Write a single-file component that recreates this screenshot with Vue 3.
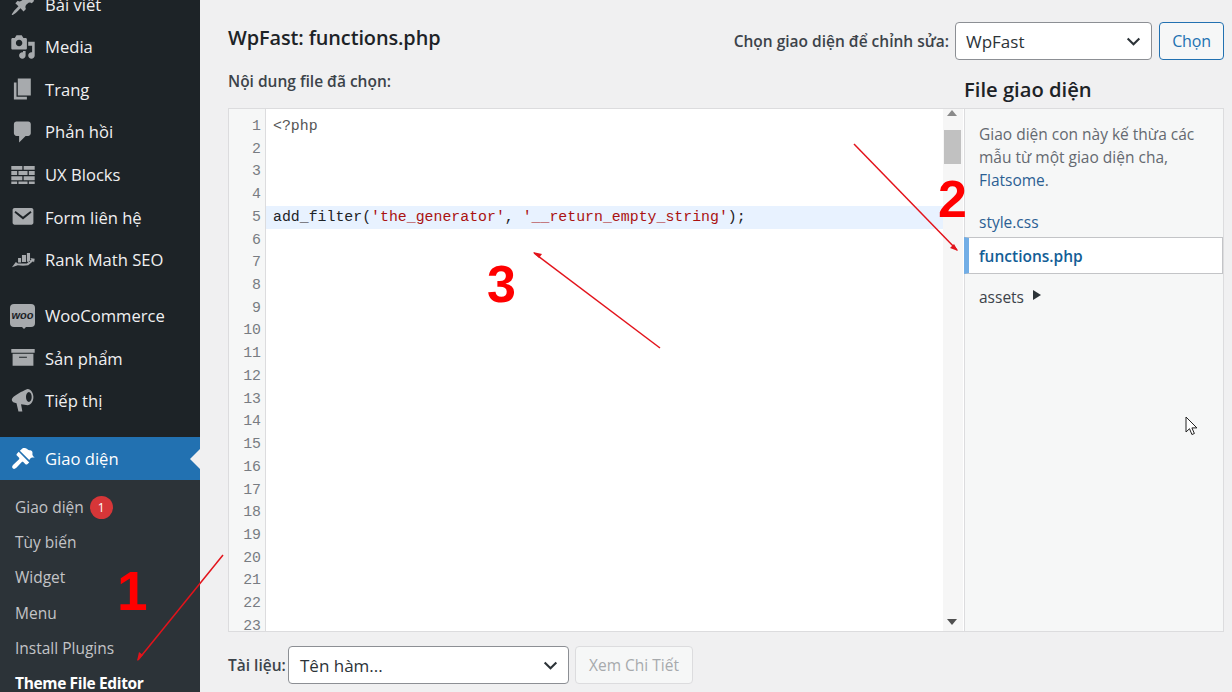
<script setup>
const icons = {
  post: 'M10.44 3.02l1.82-1.82 6.36 6.35-1.83 1.82c-1.05-.68-2.48-.57-3.41.36l-.75.75c-.92.93-1.04 2.35-.35 3.4l-1.83 1.82-2.41-2.41-2.8 2.79c-.42.42-3.38 2.71-3.8 2.29s1.86-3.39 2.28-3.81l2.79-2.79L4.1 9.36l1.83-1.82c1.05.69 2.48.57 3.4-.36l.75-.75c.93-.92 1.05-2.35.36-3.41z',
  media: 'M13 11V4c0-.55-.45-1-1-1h-1.67L9 1H5L3.67 3H2c-.55 0-1 .45-1 1v7c0 .55.45 1 1 1h10c.55 0 1-.45 1-1zM7 4.5c1.38 0 2.5 1.12 2.5 2.5S8.38 9.5 7 9.5 4.5 8.38 4.5 7 5.62 4.5 7 4.5zM14 6h5v10.5c0 1.38-1.12 2.5-2.5 2.5S14 17.88 14 16.5s1.12-2.5 2.5-2.5c.17 0 .34.02.5.05V9h-3V6zm-4 8.05V13h2v3.5c0 1.38-1.12 2.5-2.5 2.5S7 17.88 7 16.5 8.12 14 9.5 14c.17 0 .34.02.5.05z',
  page: 'M6 15V2h10v13H6zm-1 1h8v2H3V5h2v11z',
  comment: 'M5 2h9c1.1 0 2 .9 2 2v7c0 1.1-.9 2-2 2h-2l-5 5v-5H5c-1.1 0-2-.9-2-2V4c0-1.1.9-2 2-2z',
  blocks: 'M1 3h8.5v3H1zM10.5 3H19v3h-8.5zM1 7h4.5v3H1zM6.5 7h7v3h-7zM14.5 7H19v3h-4.5zM1 11h8.5v3H1zM10.5 11H19v3h-8.5zM1 15h4.5v2H1zM6.5 15h7v2h-7zM14.5 15H19v2h-4.5z',
  mail: 'M2 4.5C2 3.7 2.7 3 3.5 3h13c.8 0 1.5.7 1.5 1.5v10c0 .8-.7 1.5-1.5 1.5h-13C2.7 16 2 15.3 2 14.5zM4.3 5.4L3.4 6.6 10 11.9l6.6-5.3-.9-1.2L10 9.8z',
  rank: 'M13 4.6h2.4v6.7H13zM9.2 6.2h3.1v5.4H9.2zM6.2 8.5h2.3v3.5H6.2zM1.5 15.500L4.500 11.500 6 12.700h7l3.500-3.200-1-1 3.500.5-.5 3-.8-1L14 14l-4 .5-4-.5z',
  archive: 'M1 3h18v3H1zM2 6.800h16V16H2zM7 9v.8h6V9z',
  mega: 'M13.500.7C11 1.700 6 4 2.500 7c-1.500 1.500-1.500 3 0 4L5 11.800 6.500 18h3L8.500 12.500c2 .4 3.500.6 5 .7 2.500 0 4.500-2.700 4.500-6.200S16 .6 13.500.7zM14.500 3.100c-1.200 0-2.200 1.700-2.200 3.800s1 3.800 2.200 3.800 2.200-1.700 2.200-3.800-1-3.800-2.200-3.800z',
  brush: 'M7.600 3.600L14.800 10.800 16 9.300c.5-.6 1-.6 1.600-.5l1.400.1-1-.9c-.9-1-.8-1.700-.7-2.500.1-1-.3-1.700-1.100-2-.9-.3-1.700-.2-2.600-.8C12.800 1.800 10.500 1.200 9.500 2zM6.700 4.500L5.300 6c-.4.5-.4 1 0 1.400l1.500 1.500c.5.500.5 1 0 1.500l-4.300 4c-1 1-1.100 2-.4 2.800s1.800.6 2.800-.4l4-4.300c.5-.5 1-.5 1.500 0l1.500 1.500c.4.4.9.4 1.400 0l1.500-1.400z',
}
const group1 = [
  { label: 'Bài viết', icon: 'post' },
  { label: 'Media', icon: 'media' },
  { label: 'Trang', icon: 'page' },
  { label: 'Phản hồi', icon: 'comment' },
  { label: 'UX Blocks', icon: 'blocks' },
  { label: 'Form liên hệ', icon: 'mail' },
  { label: 'Rank Math SEO', icon: 'rank' },
]
const group2 = [
  { label: 'WooCommerce', icon: 'woo' },
  { label: 'Sản phẩm', icon: 'archive' },
  { label: 'Tiếp thị', icon: 'mega' },
]
const subs = ['Tùy biến', 'Widget', 'Menu', 'Install Plugins']
const lines = Array.from({ length: 23 }, (_, i) => i + 1)
</script>

<template>
  <div class="page">
    <aside class="side">
      <ul class="menu first">
        <li v-for="m in group1" :key="m.label" class="item">
          <svg class="ico" viewBox="0 0 20 20"><path :d="icons[m.icon]" /></svg>
          <span>{{ m.label }}</span>
        </li>
      </ul>
      <ul class="menu second">
        <li v-for="m in group2" :key="m.label" class="item">
          <span v-if="m.icon === 'woo'" class="woo">woo</span>
          <svg v-else class="ico" viewBox="0 0 20 20"><path :d="icons[m.icon]" /></svg>
          <span>{{ m.label }}</span>
        </li>
      </ul>
      <div class="active">
        <svg class="ico white" viewBox="0 0 20 20"><path :d="icons.brush" /></svg>
        <span>Giao diện</span>
        <i class="notch"></i>
      </div>
      <ul class="sub">
        <li>Giao diện <b class="badge">1</b></li>
        <li v-for="s in subs" :key="s">{{ s }}</li>
        <li class="current">Theme File Editor</li>
      </ul>
    </aside>

    <main class="main">
      <div class="top">
        <h1>WpFast: functions.php</h1>
        <div class="chooser">
          <label>Chọn giao diện để chỉnh sửa:</label>
          <div class="select theme">
            <span>WpFast</span>
            <svg class="chev" viewBox="0 0 16 16"><path d="M2.500 5.200L8 10.500l5.500-5.300" /></svg>
          </div>
          <button class="btn">Chọn</button>
        </div>
      </div>

      <div class="workspace">
        <section class="left">
          <div class="caption">Nội dung file đã chọn:</div>
          <div class="editor">
            <div class="gutter">
              <div v-for="n in lines" :key="n" class="num">{{ n }}</div>
            </div>
            <div class="code">
              <div v-for="n in lines" :key="n" class="line" :class="{ hl: n === 5 }">
                <template v-if="n === 1"><span class="meta">&lt;?php</span></template>
                <template v-else-if="n === 5">add_filter(<span class="str">'the_generator'</span>, <span class="str">'__return_empty_string'</span>);</template>
              </div>
            </div>
            <div class="scroll">
              <i class="up"></i>
              <i class="thumb"></i>
              <i class="down"></i>
            </div>
          </div>
        </section>

        <section class="right">
          <h2>File giao diện</h2>
          <div class="files">
            <p class="note">Giao diện con này kế thừa các mẫu từ một giao diện cha, <a>Flatsome</a>.</p>
            <a class="file">style.css</a>
            <a class="file on">functions.php</a>
            <div class="file dir">assets <i class="tri"></i></div>
          </div>
        </section>
      </div>

      <div class="docs">
        <label>Tài liệu:</label>
        <div class="select fn">
          <span>Tên hàm...</span>
          <svg class="chev" viewBox="0 0 16 16"><path d="M2.500 5.200L8 10.500l5.500-5.300" /></svg>
        </div>
        <button class="btn off">Xem Chi Tiết</button>
      </div>
    </main>

    <svg class="marks" viewBox="0 0 1232 692">
      <g class="arrows">
        <path d="M223 555L138 660" />
        <path d="M854 144L957 250" />
        <path d="M660 348L534 253" />
      </g>
      <path class="head" d="M137 661l2-9 4 3zM958 251l-8-3 4-4zM533 252l9 2-3 4z" />
      <text x="117" y="610" font-size="55">1</text>
      <text x="938" y="217" font-size="52">2</text>
      <text x="487" y="302" font-size="52">3</text>
    </svg>
    <svg class="cursor" viewBox="0 0 13 20"><path d="M1 1v15l3.500-3.300 2.400 5.800 2.500-1-2.500-5.600h5z" /></svg>
  </div>
</template>

<style>
html, body { margin: 0; background: #f0f0f1; overflow: hidden; }
</style>

<style scoped>
.page {
  position: relative;
  display: flex;
  width: 1232px;
  height: 692px;
  overflow: hidden;
  font-family: "Open Sans", "Noto Sans", sans-serif;
  color: #2c3338;
  background: #f0f0f1;
}
ul { list-style: none; margin: 0; padding: 0; }

.side {
  flex: 0 0 200px;
  background: #1d2327;
  color: #f0f0f1;
  font-size: 16.6px;
}
.menu.first { margin-top: -17.1px; }
.menu.second { margin-top: 13.4px; }
.item {
  display: flex;
  align-items: center;
  height: 42.6px;
  padding-left: 10px;
  gap: 9px;
}
.ico { width: 26px; height: 26px; flex: none; fill: #a7aaad; fill-rule: evenodd; }
.ico.white { fill: #fff; }
.woo {
  position: relative;
  width: 25px;
  height: 23px;
  margin-right: 1px;
  flex: none;
  border-radius: 4px;
  background: #a7aaad;
  color: #1d2327;
  font: italic 700 11px/22px "Liberation Sans", sans-serif;
  text-align: center;
}
.woo::after {
  content: "";
  position: absolute;
  left: 12px;
  bottom: -2px;
  border: 2px solid transparent;
  border-bottom: 0;
  border-top-color: #a7aaad;
}
.active {
  position: relative;
  display: flex;
  align-items: center;
  gap: 9px;
  height: 43px;
  margin-top: 14.8px;
  padding-left: 10px;
  background: #2271b1;
  color: #fff;
}
.notch {
  position: absolute;
  right: 0;
  top: 12px;
  border: 10px solid transparent;
  border-left-width: 0;
  border-right-color: #f0f0f1;
}
.sub {
  height: 212px;
  padding: 10px 0 0 15px;
  background: #2c3338;
  color: #c3c4c7;
  font-size: 15.5px;
}
.sub li { height: 35.2px; line-height: 35px; }
.sub .current { color: #fff; font-weight: 700; letter-spacing: -0.35px; }
.badge {
  display: inline-block;
  width: 23px;
  height: 23px;
  margin-left: 2px;
  border-radius: 50%;
  background: #d63638;
  color: #fff;
  font-size: 12px;
  font-weight: 400;
  line-height: 23px;
  text-align: center;
  vertical-align: 1px;
}

.main {
  flex: 1;
  min-width: 0;
  padding: 22px 8px 0 28px;
  display: flex;
  flex-direction: column;
}
.top {
  display: flex;
  justify-content: space-between;
  align-items: flex-start;
  height: 38px;
}
h1 {
  margin: 0;
  font-size: 19.9px;
  font-weight: 600;
  line-height: 31px;
  letter-spacing: -0.1px;
  color: #1d2327;
}
.chooser { display: flex; align-items: center; font-size: 15.5px; font-weight: 600; color: #3c434a; }
.chooser label { margin-right: 6px; }
.select {
  box-sizing: border-box;
  display: flex;
  align-items: center;
  justify-content: space-between;
  height: 38px;
  padding: 0 9px 0 11px;
  background: #fff;
  border: 1px solid #8c8f94;
  border-radius: 4px;
  color: #2c3338;
  font-size: 17px;
  font-weight: 400;
}
.select.theme { width: 197px; padding-left: 10px; }
.chev { width: 17px; height: 17px; fill: none; stroke: #2c3338; stroke-width: 2; }
.btn {
  box-sizing: border-box;
  height: 38px;
  margin-left: 7px;
  padding: 0;
  width: 65px;
  background: #f6f7f7;
  border: 1px solid #2271b1;
  border-radius: 4px;
  color: #2271b1;
  font: 400 16px "Open Sans", sans-serif;
  letter-spacing: -0.2px;
}
.workspace { display: flex; align-items: flex-start; }
.left { width: 736px; flex: none; }
.caption {
  height: 48px;
  padding-top: 10px;
  box-sizing: border-box;
  font-size: 15.5px;
  font-weight: 600;
  color: #3c434a;
  line-height: 22px;
}
.editor {
  display: flex;
  height: 524px;
  box-sizing: border-box;
  border: 1px solid #dcdcde;
  border-right: 0;
  background: #fff;
  overflow: hidden;
}
.gutter {
  flex: 0 0 37px;
  box-sizing: border-box;
  padding: 6px 4px 0 0;
  background: #f6f7f7;
  border-right: 1px solid #dcdcde;
  color: #787c82;
  text-align: right;
}
.num, .line {
  height: 22.73px;
  line-height: 22.73px;
  font-family: "Liberation Mono", monospace;
  font-size: 14.87px;
}
.code { flex: 1; padding-top: 6px; min-width: 0; }
.line { padding-left: 7px; color: #1d2327; white-space: pre; }
.line.hl { background: #e8f2ff; }
.meta { color: #555; }
.str { color: #a11; }
.scroll {
  flex: 0 0 21px;
  position: relative;
  background: #f6f6f6;
  border-right: 1px solid #fff;
  box-sizing: border-box;
}
.thumb { position: absolute; left: 1px; right: 2px; top: 21px; height: 34px; background: #c1c1c1; }
.up, .down { position: absolute; left: 4px; border: 5px solid transparent; }
.up { top: 1px; border-top: 0; border-bottom: 6px solid #8a8a8a; }
.down { bottom: 6px; border-bottom: 0; border-top: 6px solid #505050; }

.right { flex: 1; min-width: 0; }
h2 {
  margin: 0;
  height: 48px;
  box-sizing: border-box;
  padding-top: 17px;
  font-size: 20.2px;
  font-weight: 600;
  line-height: 24px;
  color: #1d2327;
}
.files {
  box-sizing: border-box;
  height: 524px;
  border: 1px solid #dcdcde;
  background: #f6f7f7;
  font-size: 15.5px;
}
.note { margin: 0; padding: 14px 14px 0 14px; height: 98px; box-sizing: border-box; line-height: 23px; color: #646970; }
.note a, .file { color: #2c5f93; }
.file { display: flex; align-items: center; height: 30px; padding-left: 14px; }
.file.on {
  box-sizing: border-box;
  height: 37px;
  padding-left: 10px;
  margin-left: -1px;
  margin-bottom: 8px;
  background: #fff;
  border: 1px solid #c3c4c7;
  border-left: 5px solid #72aee6;
  color: #135e96;
  font-weight: 600;
}
.file.dir { color: #3c434a; gap: 9px; }
.tri { border-left: 8px solid #2c3338; border-top: 5px solid transparent; border-bottom: 5px solid transparent; margin-top: -4px; }

.docs {
  display: flex;
  align-items: center;
  margin-top: 14px;
  font-size: 15.5px;
  font-weight: 600;
  color: #3c434a;
}
.docs label { width: 60px; }
.select.fn { width: 281px; }
.btn.off {
  margin-left: 6px;
  width: 118px;
  border-color: #dcdcde;
  color: #a7aaad;
  background: #f6f7f7;
  font-size: 15.5px;
  letter-spacing: 0;
}

.marks { position: absolute; inset: 0; width: 1232px; height: 692px; pointer-events: none; }
.arrows path { fill: none; stroke: #e3131b; stroke-width: 1.5; }
.head { fill: #e3131b; }
.marks text { fill: #f00; font-family: "Liberation Sans", sans-serif; font-weight: 700; }
.cursor { position: absolute; left: 1185px; top: 416px; width: 13px; height: 20px; }
.cursor path { fill: #fff; stroke: #222; stroke-width: 1; }
</style>
